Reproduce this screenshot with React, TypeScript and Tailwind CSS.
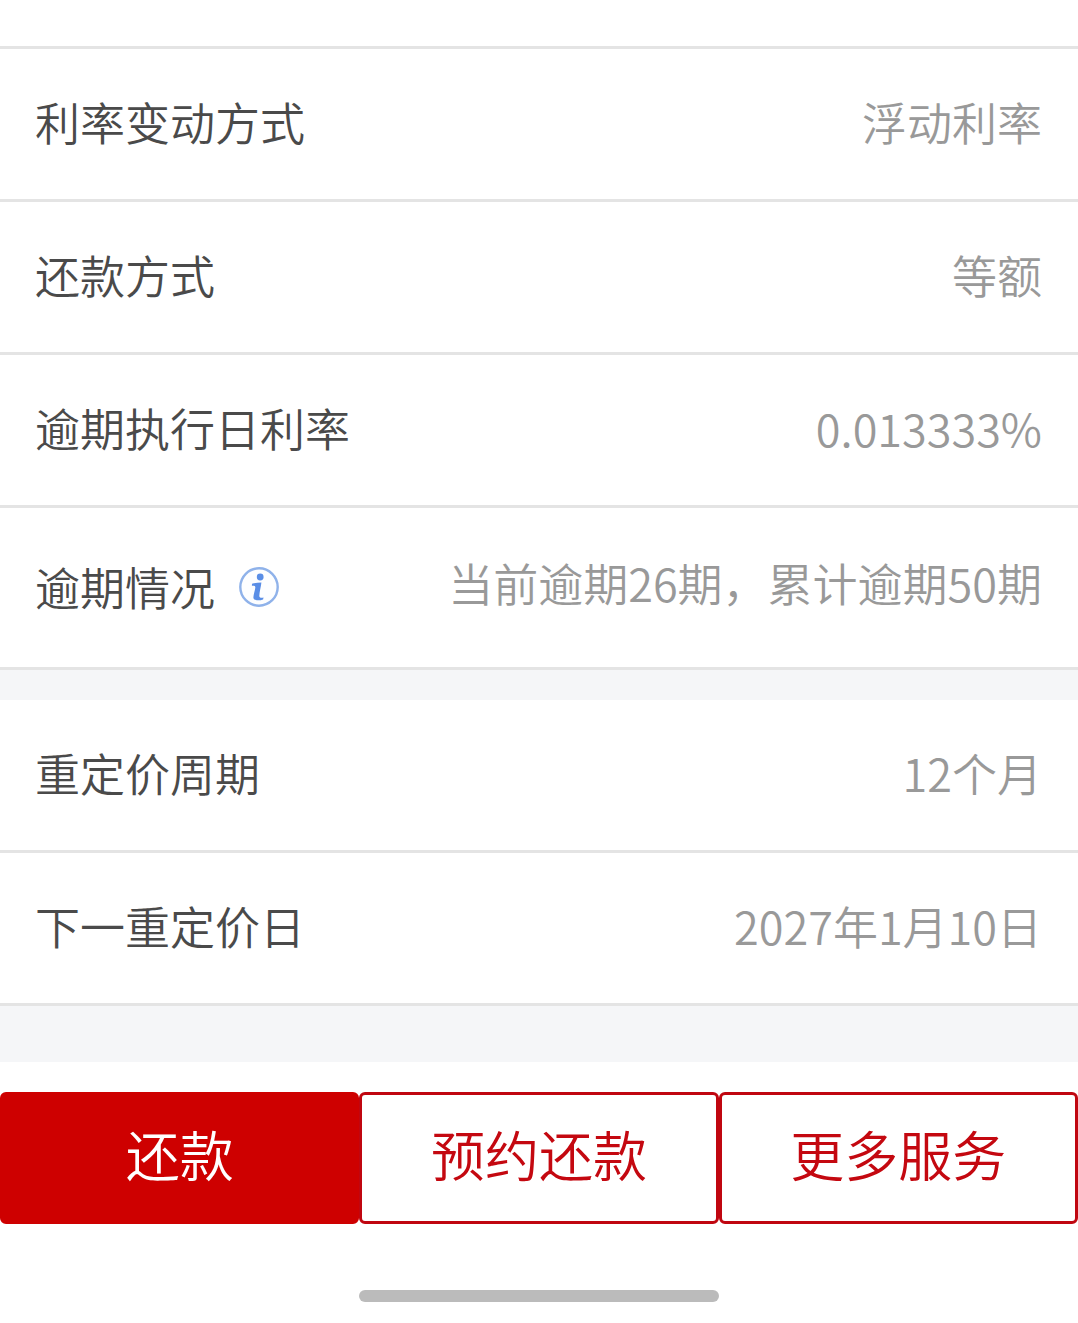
import type { ReactNode } from "react";

type RowProps = {
  label: string;
  value: string;
  tall?: boolean;
  children?: ReactNode;
};

const rateRows = [
  { label: "利率变动方式", value: "浮动利率" },
  { label: "还款方式", value: "等额" },
  { label: "逾期执行日利率", value: "0.013333%" },
];

const repricingRows = [
  { label: "重定价周期", value: "12个月" },
  { label: "下一重定价日", value: "2027年1月10日" },
];

function InfoIcon() {
  return (
    <svg viewBox="0 0 40 40" className="block size-10" aria-hidden="true">
      <circle cx="20" cy="20" r="18.7" fill="#fdfeff" stroke="#8fb2ea" strokeWidth="2.4" />
      <circle cx="21.2" cy="10" r="3.4" fill="#5a8ee6" />
      <path
        d="M13 16.8c2.500-.8 5.600-1.200 9.400-1.200-.5 4.400-1.900 9.400-2.100 13.200 0 1.900 1.400 2.400 4.200 1.800l-.4 1.800c-3.200 1.300-10 1.600-9.700-2.200.1-2.700 1.700-7.100 1.900-9.700.1-1.500-1-1.900-3.400-1.700z"
        fill="#5a8ee6"
      />
    </svg>
  );
}

function Row({ label, value, tall, children }: RowProps) {
  return (
    <div
      className={`flex justify-between border-b-3 border-[#e4e4e4] pr-9 pl-[35px] ${
        tall ? "items-start pt-11 pb-[49px]" : "items-center pt-[42px] pb-[46px]"
      }`}
    >
      <dt className={`flex items-center gap-6 text-[#4a4a4a] ${tall ? "pt-1" : ""}`}>
        {label}
        {children}
      </dt>
      <dd className="text-right text-[#999999]">{value}</dd>
    </div>
  );
}

export default function App() {
  return (
    <main className="min-h-screen bg-white font-['Noto_Sans_CJK_SC',sans-serif] text-[45px] leading-[62px] font-[350]">
      <div className="h-[49px] border-b-3 border-[#e4e4e4]" />

      <dl>
        {rateRows.map((row) => (
          <Row key={row.label} label={row.label} value={row.value} />
        ))}
        <Row label="逾期情况" value="当前逾期26期，累计逾期50期" tall>
          <button type="button" aria-label="逾期说明">
            <InfoIcon />
          </button>
        </Row>
      </dl>

      <div className="h-[30px] bg-[#f5f6f8]" />

      <dl>
        {repricingRows.map((row) => (
          <Row key={row.label} label={row.label} value={row.value} />
        ))}
      </dl>

      <div className="h-14 bg-[#f5f6f8]" />

      {/* Bottom actions */}
      <div className="grid grid-cols-3 pt-[30px] text-[54px] leading-[78px] text-[#c40810]">
        <button type="button" className="rounded-md border-3 border-[#ce0000] bg-[#ce0000] pt-5 pb-7 text-white">
          还款
        </button>
        <button type="button" className="rounded-md border-3 border-[#c00610] pt-5 pb-7">
          预约还款
        </button>
        <button type="button" className="rounded-md border-3 border-[#c00610] pt-5 pb-7">
          更多服务
        </button>
      </div>

      {/* Home indicator */}
      <div className="mx-auto mt-[66px] h-3 w-1/3 rounded-full bg-[#bbbbbb]" />
    </main>
  );
}
